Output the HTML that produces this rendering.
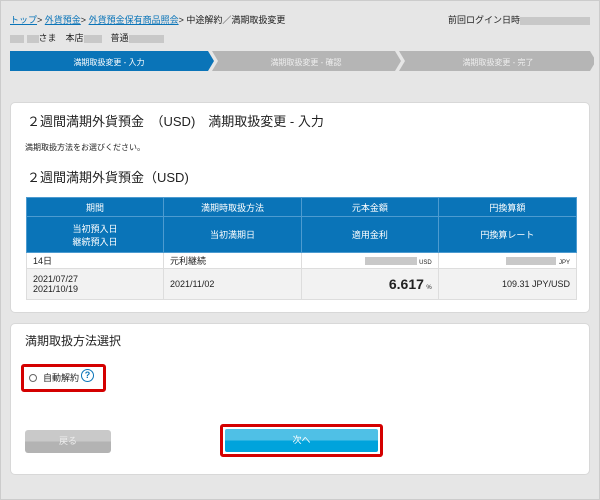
<!DOCTYPE html>
<html><head><meta charset="utf-8"><style>
*{margin:0;padding:0;box-sizing:border-box}
body{width:600px;height:500px;background:#e6e6e6;font-family:"Liberation Sans","Noto Sans CJK JP",sans-serif;position:relative;overflow:hidden;color:#222;border:1px solid #ccc}
.a{position:absolute}
.blur{display:inline-block;background:#c8c8c8;height:8px;vertical-align:middle}
.card{position:absolute;left:9px;width:580px;background:#fff;border-radius:5px;border:1px solid #d8d8d8}
table{border-collapse:collapse;position:absolute;left:25px;top:196px;width:551px;font-size:9px}
td{border:1px solid #ddd;height:16px;padding:0 6px}
th{background:#0a74b8;color:#fff;font-weight:normal;border:1px solid #4d9bd0;font-size:9px}
</style></head><body>
<div class="a" style="left:9px;top:12px;font-size:9px"><span style="color:#0a74b8;text-decoration:underline">トップ</span>&gt; <span style="color:#0a74b8;text-decoration:underline">外貨預金</span>&gt; <span style="color:#0a74b8;text-decoration:underline">外貨預金保有商品照会</span>&gt; 中途解約／満期取扱変更</div>
<div class="a" style="left:447px;top:12px;font-size:9px">前回ログイン日時<span class="blur" style="width:70px"></span></div>
<div class="a" style="left:9px;top:30px;font-size:9px"><span class="blur" style="width:14px"></span> <span class="blur" style="width:12px"></span>さま　本店<span class="blur" style="width:18px"></span>　普通<span class="blur" style="width:35px"></span></div>
<svg class="a" style="left:9px;top:50px" width="584" height="21">
<polygon points="0,0 198,0 204,10 198,20 0,20" fill="#0a74b8"/>
<polygon points="202,0 385,0 391,10 385,20 202,20 208,10" fill="#b5b5b5"/>
<polygon points="389,0 580,0 586,10 580,20 389,20 395,10" fill="#b5b5b5"/>
<text x="99" y="14" fill="#fff" font-size="8" text-anchor="middle" font-family="Liberation Sans,Noto Sans CJK JP,sans-serif">満期取扱変更 - 入力</text>
<text x="296" y="14" fill="#eee" font-size="8" text-anchor="middle" font-family="Liberation Sans,Noto Sans CJK JP,sans-serif">満期取扱変更 - 確認</text>
<text x="488" y="14" fill="#eee" font-size="8" text-anchor="middle" font-family="Liberation Sans,Noto Sans CJK JP,sans-serif">満期取扱変更 - 完了</text>
</svg>
<div class="card" style="top:101px;height:211px"></div>
<div class="a" style="left:26px;top:110px;font-size:13px">２週間満期外貨預金　（USD)　満期取扱変更 - 入力</div>
<div class="a" style="left:24px;top:141px;font-size:8px">満期取扱方法をお選びください。</div>
<div class="a" style="left:26px;top:166px;font-size:13px">２週間満期外貨預金（USD)</div>
<table>
<tr style="height:19px"><th>期間</th><th>満期時取扱方法</th><th>元本金額</th><th>円換算額</th></tr>
<tr style="height:36px"><th>当初預入日<br>継続預入日</th><th>当初満期日</th><th>適用金利</th><th>円換算レート</th></tr>
<tr><td style="width:137px">14日</td><td style="width:138px">元利継続</td><td style="text-align:right"><span class="blur" style="width:52px"></span> <span style="font-size:6px">USD</span></td><td style="text-align:right"><span class="blur" style="width:50px"></span> <span style="font-size:6px">JPY</span></td></tr>
<tr style="height:31px;background:#f2f2f2"><td>2021/07/27<br>2021/10/19</td><td>2021/11/02</td><td style="text-align:right"><b style="font-size:14px">6.617</b> <span style="font-size:6px">%</span></td><td style="text-align:right">109.31 JPY/USD</td></tr>
</table>
<div class="card" style="top:322px;height:152px"></div>
<div class="a" style="left:24px;top:331px;font-size:12px">満期取扱方法選択</div>
<div class="a" style="left:20px;top:363px;width:85px;height:28px;border:3px solid #d40000;border-radius:3px"></div>
<div class="a" style="left:28px;top:373px;width:8px;height:8px;border:1px solid #666;border-radius:50%"></div>
<div class="a" style="left:42px;top:370px;font-size:9px">自動解約</div>
<div class="a" style="left:80px;top:368px;width:13px;height:13px;border:1.5px solid #0a74b8;border-radius:50%;color:#0a74b8;font-size:9px;font-weight:bold;text-align:center;line-height:11px">?</div>
<div class="a" style="left:24px;top:429px;width:86px;height:23px;border-radius:3px;background:linear-gradient(#c9c9c9 50%,#b3b3b3 50%);color:#eee;font-size:9px;text-align:center;line-height:23px">戻る</div>
<div class="a" style="left:219px;top:423px;width:163px;height:33px;border:3px solid #d40000;border-radius:3px"></div>
<div class="a" style="left:224px;top:428px;width:153px;height:23px;border-radius:2px;background:linear-gradient(#4fc0e6 50%,#00a3dc 50%);color:#fff;font-size:9px;text-align:center;line-height:23px">次へ</div>
</body></html>
